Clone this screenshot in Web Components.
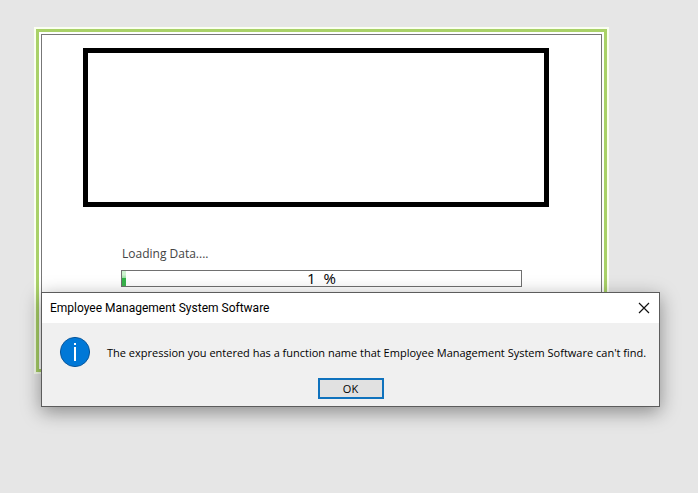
<!DOCTYPE html>
<html lang="en">
<head>
<meta charset="utf-8">
<title>Employee Management System Software</title>
<style>
  body { margin: 0; background: #e6e6e6; font-family: "Open Sans", "Noto Sans", sans-serif; color: #000; }
</style>
</head>
<body>
<app-desktop>
  <splash-form>
    <logo-frame></logo-frame>
    <load-progress value="1" label="Loading Data...."></load-progress>
  </splash-form>
  <message-dialog slot="overlay" heading="Employee Management System Software">The expression you entered has a function name that Employee Management System Software can't find.</message-dialog>
</app-desktop>
<script>
class AppDesktop extends HTMLElement {
  constructor() {
    super();
    this.attachShadow({ mode: 'open' }).innerHTML = `
      <style>
        :host { display: block; position: relative; min-height: 100vh; box-sizing: border-box; padding: 27px 89px 0 34px; }
        ::slotted([slot="overlay"]) { position: absolute; top: 292px; left: 41px; right: 38px; }
      </style>
      <slot></slot><slot name="overlay"></slot>`;
  }
}
class SplashForm extends HTMLElement {
  constructor() {
    super();
    this.attachShadow({ mode: 'open' }).innerHTML = `
      <style>
        :host { display: block; border: 2px solid #fafff0; background: #fff; }
        .band { border: 3px solid #a9d168; padding: 2px; }
        .page { border: 1px solid #777; padding: 13px 52px 79px 41px; display: flex; flex-direction: column; gap: 37px; }
      </style>
      <div class="band"><div class="page"><slot></slot></div></div>`;
  }
}
class LogoFrame extends HTMLElement {
  constructor() {
    super();
    this.attachShadow({ mode: 'open' }).innerHTML = `
      <style>:host { display: block; box-sizing: border-box; height: 159px; border: 5px solid #000; background: #fff; }</style>
      <slot></slot>`;
  }
}
class LoadProgress extends HTMLElement {
  constructor() {
    super();
    const value = this.getAttribute('value');
    this.attachShadow({ mode: 'open' }).innerHTML = `
      <style>
        :host { display: flex; flex-direction: column; gap: 6px; padding: 0 27px 0 38px; }
        .label { font-size: 12px; line-height: 20px; color: #444; padding-left: 1px; }
        .track { display: grid; box-sizing: border-box; height: 17px; border: 1px solid #707070; background: #fff; }
        .fill { grid-area: 1 / 1; width: ${value}%; background: linear-gradient(#cdf2cf 0 25%, #9be0a2 45%, #2fb446 50%, #3fb44f); }
        .value { grid-area: 1 / 1; text-align: center; font-size: 15px; line-height: 15px; white-space: pre; }
      </style>
      <div class="label" id="label">${this.getAttribute('label')}</div>
      <div class="track" role="progressbar" aria-labelledby="label" aria-valuenow="${value}" aria-valuemin="0" aria-valuemax="100">
        <div class="fill"></div><div class="value">${value}  %</div>
      </div>`;
  }
}
class InfoIcon extends HTMLElement {
  constructor() {
    super();
    this.attachShadow({ mode: 'open' }).innerHTML = `
      <style>:host { display: block; flex: none; } svg { display: block; }</style>
      <svg width="32" height="32" viewBox="0 0 32 32" aria-hidden="true">
        <circle cx="16" cy="16" r="14.6" fill="#0078d7" stroke="#08569b" stroke-width="1"/>
        <path d="M15 7h2v2h-2zM15 11h2v14h-2z" fill="#fff"/>
      </svg>`;
  }
}
class MessageDialog extends HTMLElement {
  constructor() {
    super();
    this.attachShadow({ mode: 'open' }).innerHTML = `
      <style>
        :host { display: block; box-sizing: border-box; border: 1px solid #5c5c5c; background: #f0f0f0; box-shadow: 0 5px 18px rgba(0,0,0,.4); }
        header { display: flex; align-items: center; justify-content: space-between; height: 30px; background: #fff; padding: 0 9px 0 8px; }
        h1 { margin: 0; font-family: Roboto, "Noto Sans", sans-serif; font-size: 12px; line-height: 16px; font-weight: 400; }
        button { font: inherit; color: inherit; }
        .close { display: block; border: 0; padding: 0; background: none; }
        .close svg { display: block; }
        .body { display: flex; align-items: center; gap: 16px; padding: 13px 12px 0 17px; }
        .text { font-size: 11px; line-height: 16px; padding-top: 2px; white-space: nowrap; }
        footer { display: flex; justify-content: center; padding: 10px 0 7px; }
        .ok { width: 66px; height: 21px; box-sizing: border-box; border: 2px solid #0f72bd; background: #e1e1e1; padding: 0; font-size: 11px; line-height: 16px; }
      </style>
      <div role="dialog" aria-labelledby="title" aria-describedby="text">
        <header>
          <h1 id="title">${this.getAttribute('heading')}</h1>
          <button class="close" type="button" aria-label="Close">
            <svg width="12" height="12" viewBox="0 0 12 12"><path d="M1 1l10 10M11 1L1 11" stroke="#111" stroke-width="1.2"/></svg>
          </button>
        </header>
        <div class="body"><info-icon></info-icon><div class="text" id="text"><slot></slot></div></div>
        <footer><button class="ok" type="button">OK</button></footer>
      </div>`;
  }
}
customElements.define('app-desktop', AppDesktop);
customElements.define('splash-form', SplashForm);
customElements.define('logo-frame', LogoFrame);
customElements.define('load-progress', LoadProgress);
customElements.define('info-icon', InfoIcon);
customElements.define('message-dialog', MessageDialog);
</script>
</body>
</html>
